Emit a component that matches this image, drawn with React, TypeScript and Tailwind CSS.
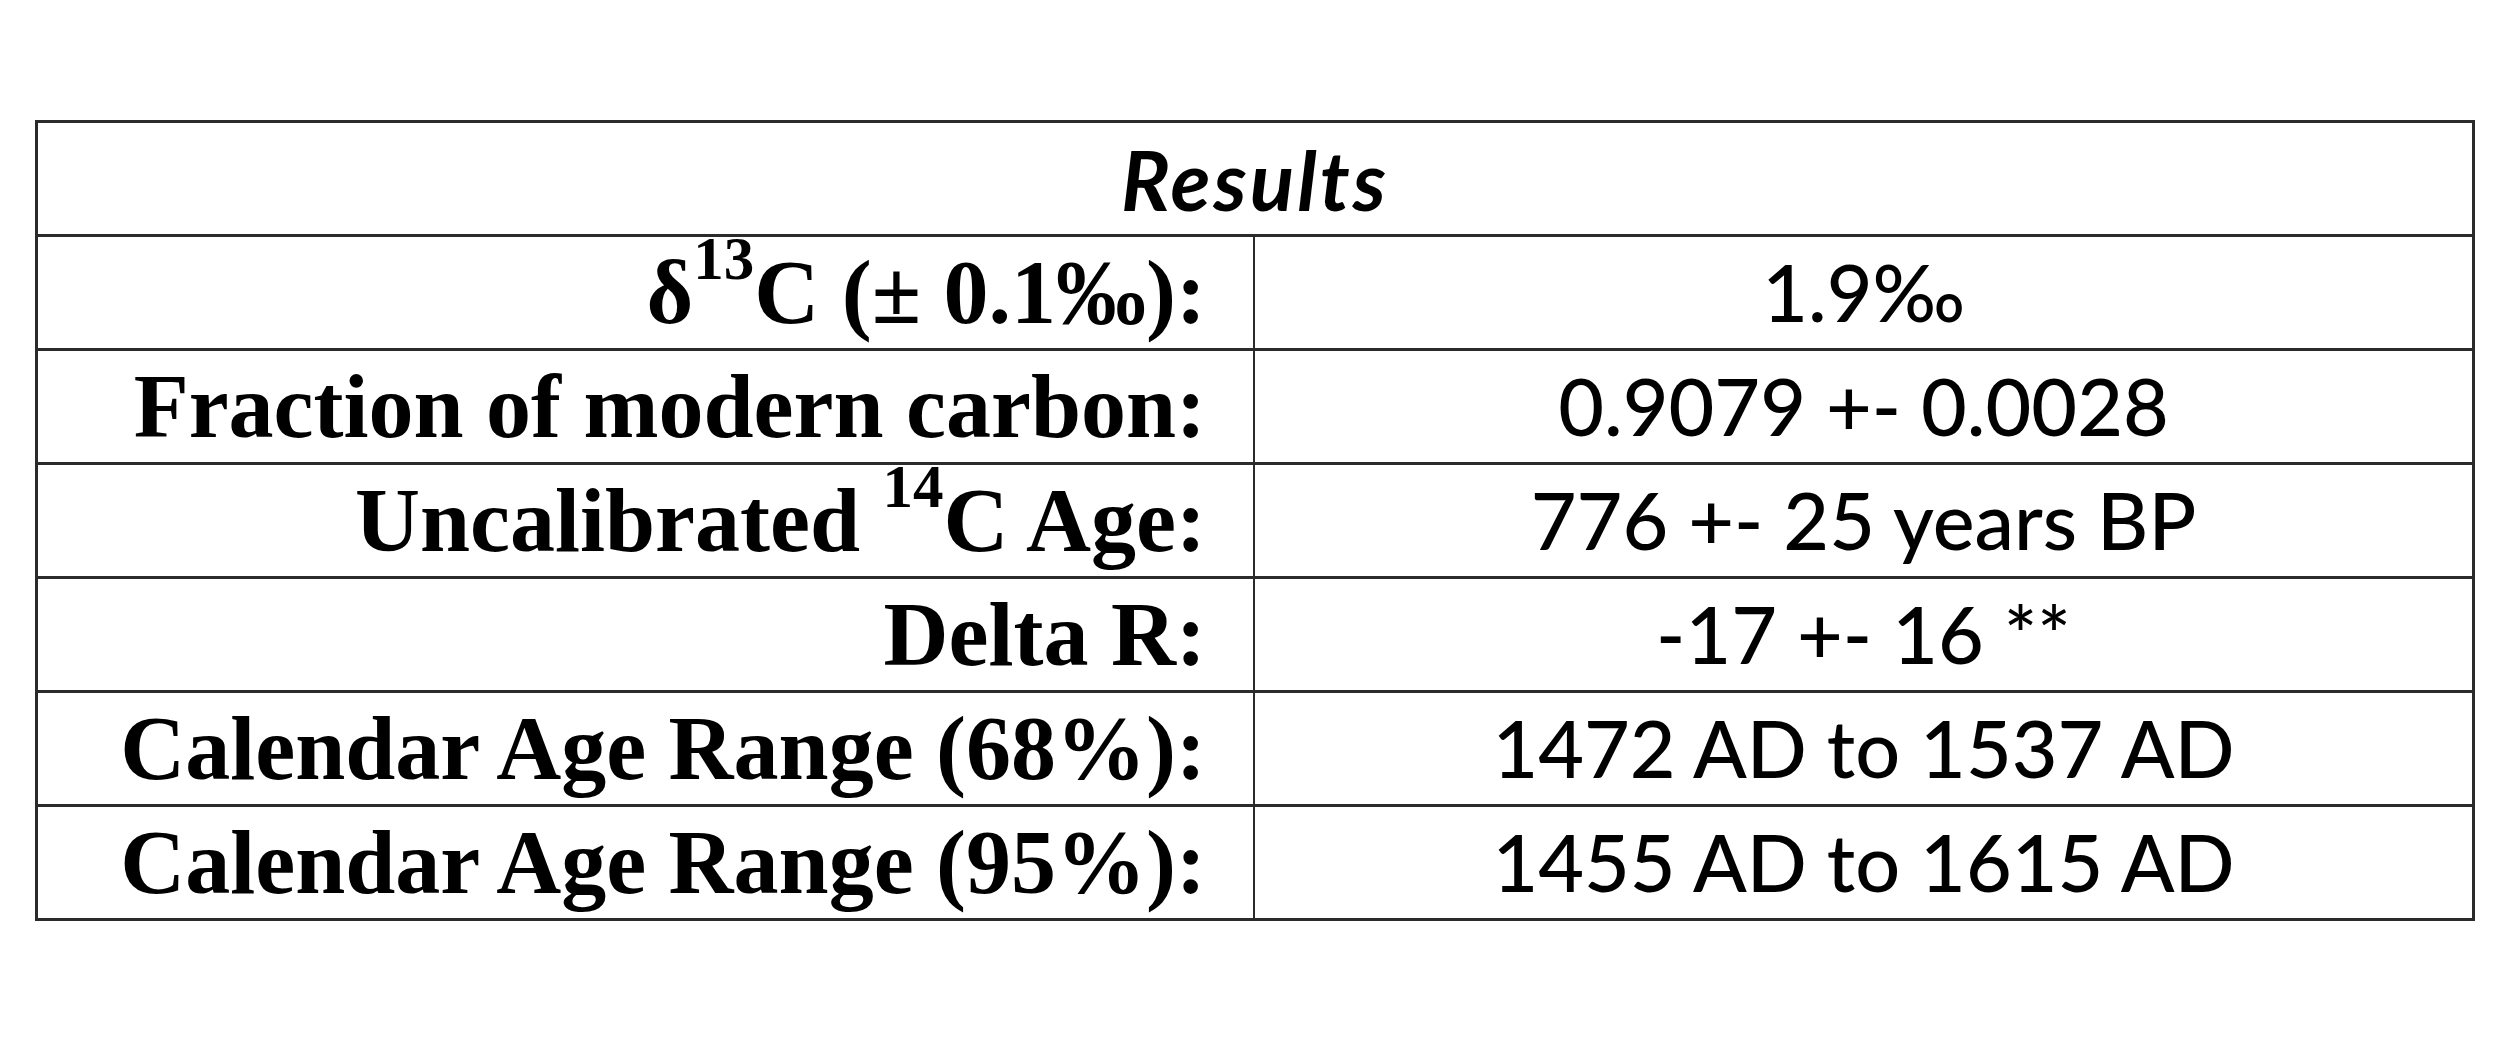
import React from "react";

type Row = { label: React.ReactNode; value: string };

const sup = "text-[61px] leading-none top-[-44px]";

const rows: Row[] = [
  {
    label: (
      <>
        δ<sup className={sup}>13</sup>C (± 0.1‰):
      </>
    ),
    value: "1.9‰",
  },
  { label: "Fraction of modern carbon:", value: "0.9079 +- 0.0028" },
  {
    label: (
      <>
        Uncalibrated <sup className={sup}>14</sup>C Age:
      </>
    ),
    value: "776 +- 25 years BP",
  },
  { label: "Delta R:", value: "-17 +- 16 **" },
  { label: "Calendar Age Range (68%):", value: "1472 AD to 1537 AD" },
  { label: "Calendar Age Range (95%):", value: "1455 AD to 1615 AD" },
];

export default function App() {
  return (
    <div className="min-h-screen w-full bg-white pt-[120px] pl-[35px] text-black">
      <div className="w-[2440px] border-[3px] border-[#2b2b2b]">
        <div className="flex h-[111px] items-center justify-center font-['Lato',sans-serif] text-[82px] font-bold italic leading-none tracking-[3px]">
          Results
        </div>
        {rows.map((r, i) => (
          <div
            key={i}
            className="grid h-[114px] grid-cols-[1215px_1fr] grid-rows-[111px] border-t-[3px] border-[#2b2b2b]"
          >
            <div className="flex h-[111px] items-center justify-end whitespace-nowrap pr-[47px] font-['Liberation_Serif','Times_New_Roman',serif] text-[90px] font-bold leading-[1.2]">
              <span>{r.label}</span>
            </div>
            <div className="flex h-[111px] items-center justify-center whitespace-nowrap border-l-2 border-[#2b2b2b] font-['Lato',sans-serif] text-[79px] font-medium leading-[1.2]">
              {r.value}
            </div>
          </div>
        ))}
      </div>
    </div>
  );
}
